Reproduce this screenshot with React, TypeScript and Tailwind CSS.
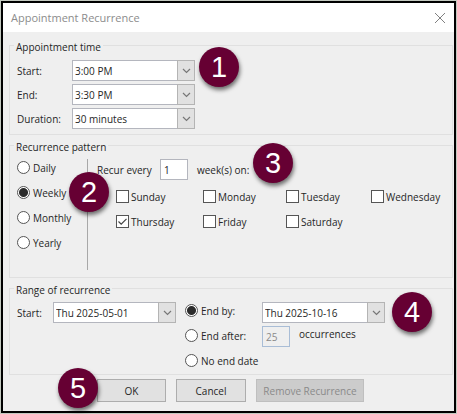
import React from "react";

const fieldLook =
  "border border-[#b4b6be] bg-white text-[10px] text-[#262626] outline-none";

function DropDown({
  id,
  label,
  options,
}: {
  id: string;
  label?: string;
  options: string[];
}) {
  return (
    <div className="relative h-[21px] w-[123px] shrink-0">
      <select
        id={id}
        aria-label={label}
        className={`h-full w-full appearance-none rounded-none pr-5 pl-0.5 ${fieldLook}`}
      >
        {options.map((option) => (
          <option key={option}>{option}</option>
        ))}
      </select>
      <span className="pointer-events-none absolute inset-y-0 right-0 flex w-[18px] items-center justify-center border border-[#b4b4b4] bg-[#e1e1e1]">
        <svg width="9" height="6" viewBox="0 0 9 6" fill="none" aria-hidden="true">
          <path d="M1 1l3.5 3.5L8 1" stroke="#777777" strokeWidth="1.2" />
        </svg>
      </span>
    </div>
  );
}

function Radio({
  name,
  label,
  checked,
}: {
  name: string;
  label: string;
  checked?: boolean;
}) {
  return (
    <label className="flex h-[25px] items-center gap-[3px] whitespace-nowrap">
      <input
        type="radio"
        name={name}
        defaultChecked={checked}
        className="size-[13px] shrink-0 appearance-none rounded-full border border-[#555555] bg-white checked:bg-[radial-gradient(circle,#2b2b2b_0_4px,white_5px)]"
      />
      <span>{label}</span>
    </label>
  );
}

function Check({ label, checked }: { label: string; checked?: boolean }) {
  return (
    <label className="flex h-[25px] items-center gap-0.5 whitespace-nowrap">
      <span className="relative size-[13px] shrink-0">
        <input
          type="checkbox"
          defaultChecked={checked}
          className="peer block size-full appearance-none border border-[#555555] bg-white"
        />
        <svg
          className="pointer-events-none absolute inset-0 hidden peer-checked:block"
          width="13"
          height="13"
          viewBox="0 0 13 13"
          fill="none"
          aria-hidden="true"
        >
          <path d="M2.5 6.5l2.7 2.7 5.3-5.4" stroke="#444444" strokeWidth="1.2" />
        </svg>
      </span>
      <span>{label}</span>
    </label>
  );
}

function Badge({ n, place }: { n: number; place: string }) {
  return (
    <span
      className={`absolute z-10 flex size-10 items-center justify-center rounded-full bg-[#660033] font-['Liberation_Sans',Arial,sans-serif] text-[29px] leading-none text-white shadow-[1px_3px_4px_rgba(0,0,0,0.55)] ${place}`}
    >
      {n}
    </span>
  );
}

function Group({
  title,
  className,
  children,
}: {
  title: string;
  className: string;
  children: React.ReactNode;
}) {
  return (
    <fieldset className={`relative min-w-0 border border-[#e0e0e0] px-[7px] ${className}`}>
      <legend className="-ml-[3px] px-0.5 pt-1 leading-4">{title}</legend>
      {children}
    </fieldset>
  );
}

const buttonLook = "h-[23px] border border-[#adadad] bg-[#e1e1e1] text-center leading-none";

export default function App() {
  return (
    <div className="bg-[#c3c9c0] p-px font-['Open_Sans','Noto_Sans',sans-serif] text-[10px] leading-4 text-[#262626]">
      <main className="border-2 border-black bg-[#efefef]">
        <header className="flex h-[29px] items-center justify-between bg-white px-2">
          <h1 className="text-[11px] text-[#8c8c8c]">Appointment Recurrence</h1>
          <button aria-label="Close" className="flex size-3 items-center justify-center">
            <svg width="12" height="12" viewBox="0 0 12 12" aria-hidden="true">
              <path d="M1 1l10 10M11 1L1 11" stroke="#808080" strokeWidth="1" />
            </svg>
          </button>
        </header>

        <form className="pt-[3px] pr-px pb-[9px] pl-1.5" onSubmit={(e) => e.preventDefault()}>
          <Group title="Appointment time" className="pt-[5px] pb-[5px]">
            <div className="grid grid-cols-[55px_auto] items-center justify-start gap-y-[3px]">
              <label htmlFor="start">Start:</label>
              <DropDown id="start" options={["3:00 PM", "3:30 PM"]} />
              <label htmlFor="end">End:</label>
              <DropDown id="end" options={["3:30 PM", "4:00 PM"]} />
              <label htmlFor="duration">Duration:</label>
              <DropDown id="duration" options={["30 minutes", "1 hour"]} />
            </div>
            <Badge n={1} place="-top-2 left-[189px]" />
          </Group>

          <Group title="Recurrence pattern" className="pb-[7px]">
            <div className="flex pt-1">
              <div className="-mt-1 w-[70px] shrink-0">
                <Radio name="pattern" label="Daily" />
                <Radio name="pattern" label="Weekly" checked />
                <Radio name="pattern" label="Monthly" />
                <Radio name="pattern" label="Yearly" />
              </div>
              <div className="h-[111px] border-l border-[#a8a8a8]" />
              <div className="min-w-0 flex-1 pl-[9px]">
                <div className="flex h-[21px] items-center">
                  <label htmlFor="weeks" className="w-[63px]">
                    Recur every
                  </label>
                  <input
                    id="weeks"
                    type="text"
                    defaultValue="1"
                    className={`h-[21px] w-7 px-[3px] ${fieldLook}`}
                  />
                  <span className="pl-[9px]">week(s) on:</span>
                </div>
                <div className="grid grid-cols-[87px_83px_85px_auto] justify-start pt-1 pl-[19px]">
                  <Check label="Sunday" />
                  <Check label="Monday" />
                  <Check label="Tuesday" />
                  <Check label="Wednesday" />
                  <Check label="Thursday" checked />
                  <Check label="Friday" />
                  <Check label="Saturday" />
                </div>
              </div>
            </div>
            <Badge n={2} place="top-[17px] left-[59px]" />
            <Badge n={3} place="-top-3 left-[243px]" />
          </Group>

          <Group title="Range of recurrence" className="pb-px">
            <div className="flex items-start">
              <div className="flex items-center pt-1">
                <label htmlFor="range-start" className="w-9">
                  Start:
                </label>
                <DropDown id="range-start" options={["Thu 2025-05-01"]} />
              </div>
              <div className="w-[86px] pl-[9px]">
                <Radio name="range" label="End by:" checked />
                <Radio name="range" label="End after:" />
                <Radio name="range" label="No end date" />
              </div>
              <div className="flex flex-col gap-[3px] pt-1">
                <DropDown id="range-end" label="End by date" options={["Thu 2025-10-16"]} />
                <div className="flex">
                  <input
                    id="occurrences"
                    type="text"
                    defaultValue="25"
                    disabled
                    className="h-[21px] w-7 border border-[#a9bdd6] px-[3px] text-[10px] text-[#8a8a8a]"
                  />
                  <label htmlFor="occurrences" className="pl-[9px]">
                    occurrences
                  </label>
                </div>
              </div>
            </div>
            <Badge n={4} place="-top-1.5 left-[382px]" />
          </Group>

          <div className="relative flex gap-2.5 pt-1 pl-[88px]">
            <button className={`${buttonLook} w-[69px]`}>OK</button>
            <button className={`${buttonLook} w-[70px]`}>Cancel</button>
            <button
              disabled
              className="h-[23px] w-[108px] border border-[#bfbfbf] bg-[#cccccc] text-center leading-none text-[#8a8a8a]"
            >
              Remove Recurrence
            </button>
            <Badge n={5} place="-top-[7px] left-[49px]" />
          </div>
        </form>
      </main>
    </div>
  );
}
